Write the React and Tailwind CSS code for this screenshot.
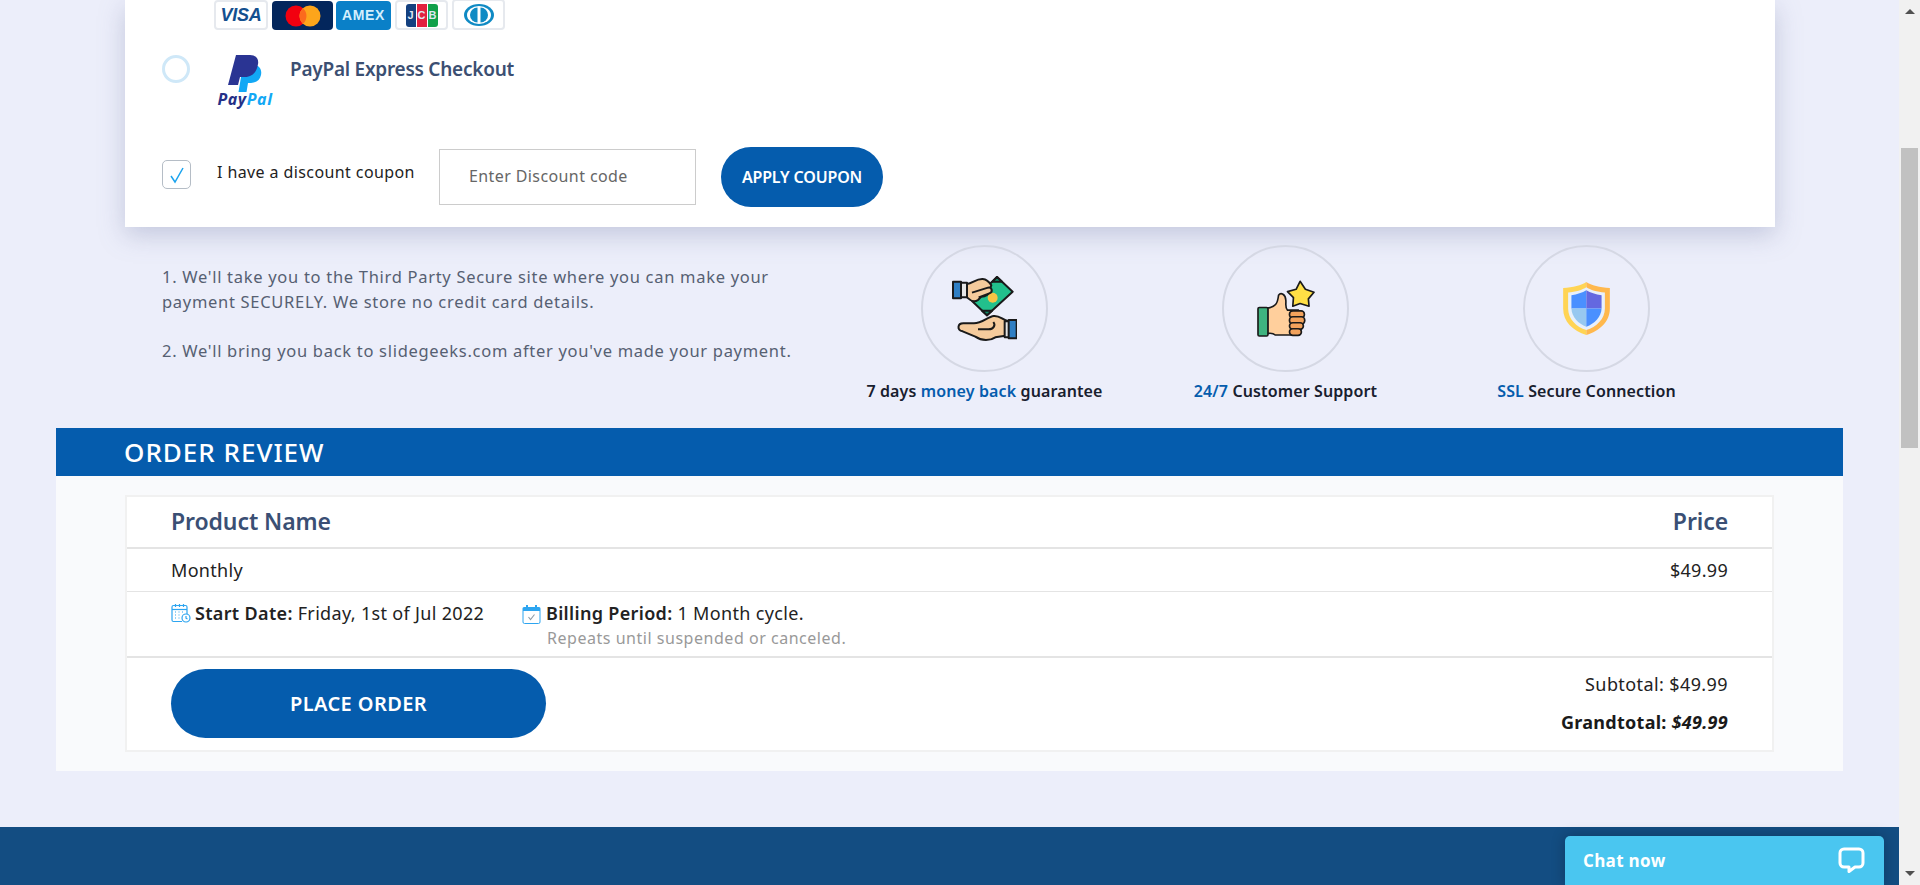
import React from "react"

function VisaCard() {
  return (
    <div className="w-[54px] h-[30px] mt-[-1px] bg-white border-2 border-[#e6e9ee] rounded-[4px] flex items-center justify-center">
      <span className="font-['Liberation_Sans',sans-serif] font-bold italic text-[18px] tracking-[-0.3px] text-[#14508f]">VISA</span>
    </div>
  )
}

function MasterCard() {
  return (
    <div className="w-[61px] h-[29px] bg-[#03265c] rounded-[4px] flex items-center justify-center">
      <svg width="38" height="22" viewBox="0 0 38 22">
        <circle cx="12" cy="11" r="10.5" fill="#f2000f" />
        <circle cx="26" cy="11" r="10.5" fill="#fda51b" />
        <path d="M19 3.2a10.5 10.5 0 0 1 0 15.6a10.5 10.5 0 0 1 0-15.6z" fill="#fb6a1d" />
      </svg>
    </div>
  )
}

function AmexCard() {
  return (
    <div className="w-[55px] h-[29px] -ml-[1px] bg-[#0a80c8] rounded-[4px] flex items-center justify-center">
      <span className="font-['Liberation_Sans',sans-serif] font-bold text-[14px] tracking-[0.6px] text-[#d4effd]">AMEX</span>
    </div>
  )
}

function JcbCard() {
  return (
    <div className="w-[53px] h-[30px] bg-white border-2 border-[#e6e9ee] rounded-[4px] flex items-center justify-center">
      <div className="flex gap-[1px] h-[23px] text-[#dfe6f2] font-bold text-[11px] font-['Liberation_Sans',sans-serif] leading-[23px] text-center">
        <span className="w-[10px] bg-[#14407f] rounded-l-[3px]">J</span>
        <span className="w-[10px] bg-[#e2213f]">C</span>
        <span className="w-[10px] bg-[#10a04a] rounded-r-[3px]">B</span>
      </div>
    </div>
  )
}

function DinersCard() {
  return (
    <div className="w-[53px] h-[31px] bg-white border-2 border-[#e6e9ee] rounded-[4px] flex items-center justify-center">
      <svg width="32" height="22" viewBox="0 0 32 22">
        <ellipse cx="16" cy="11" rx="15" ry="11" fill="#0f8ac4" />
        <ellipse cx="16" cy="11" rx="12" ry="9" fill="#fff" />
        <path d="M14.5 3.5a7.5 7.5 0 0 0 0 15z" fill="#0f8ac4" />
        <path d="M17.5 3.5a7.5 7.5 0 0 1 0 15z" fill="#0f8ac4" />
      </svg>
    </div>
  )
}

function PayPalLogo() {
  return (
    <div className="w-[58px] flex flex-col items-center">
      <svg width="34" height="37" viewBox="0 0 34 37">
        <path d="M15 10h12c5 1 7 5 6 10c-1 5-5 8-10 8h-3l-1.5 9h-8z" fill="#12a8f5" />
        <path d="M8 0h14c6 0 9 4 8 9c-1 8-6 13-13 13h-5l-2 8H0z" fill="#2a3493" />
      </svg>
      <span className="mt-[-1px] font-['Noto_Sans',sans-serif] font-bold italic text-[16px] leading-[17px] tracking-[0.6px]">
        <span className="text-[#253087]">Pay</span>
        <span className="text-[#12a8f5]">Pal</span>
      </span>
    </div>
  )
}

function MoneyIcon() {
  return (
    <svg width="65" height="65" viewBox="0 0 195 195" strokeWidth="6" stroke="#1a1a1a" strokeLinejoin="round">
      <polygon points="135,3 182,47 105,118 60,75" fill="#22c08c" />
      <polygon points="135,3 150,17 122,17" fill="#0f8f68" />
      <polygon points="105,118 90,104 120,104" fill="#0f8f68" />
      <circle cx="122" cy="65" r="15" fill="#f6c445" stroke="none" />
      <path d="M45 24C62 22 72 8 92 9C105 10 112 18 118 28L112 42C114 54 100 62 88 62L78 72C62 84 50 68 45 64z" fill="#f5cb9c" />
      <path d="M60 50L108 35C120 33 124 48 112 52L80 64" fill="#f5cb9c" />
      <rect x="25" y="20" width="20" height="44" fill="#e6e6e6" />
      <rect x="3" y="17" width="24" height="50" fill="#2f7fc4" />
      <path d="M170 136C150 132 145 118 125 120C108 122 90 142 66 142H34C16 142 14 162 32 166L70 182C90 196 115 194 130 184L170 178z" fill="#f5cb9c" />
      <path d="M78 160H110C124 160 132 148 124 138" fill="none" />
      <rect x="158" y="136" width="16" height="48" fill="#e6e6e6" />
      <rect x="170" y="132" width="24" height="55" fill="#2f7fc4" />
    </svg>
  )
}

function ThumbIcon() {
  return (
    <svg width="58" height="57" viewBox="0 0 175 170" strokeWidth="5" stroke="#1a1a1a" strokeLinejoin="round">
      <polygon points="130,3 146,27 172,36 155,56 157,78 130,70 108,78 110,52 92,34 118,27" fill="#ffdf45" />
      <path d="M32 84C55 80 62 72 65 45C72 35 86 42 87 60C88 72 84 82 92 90H125V165H55C48 158 40 160 32 160z" fill="#ffcf9c" />
      <rect x="98" y="92" width="45" height="22" rx="10" fill="#f2a25c" />
      <rect x="98" y="110" width="46" height="22" rx="10" fill="#f2a25c" />
      <rect x="98" y="128" width="42" height="20" rx="10" fill="#f2a25c" />
      <rect x="98" y="146" width="36" height="20" rx="10" fill="#f2a25c" />
      <rect x="3" y="82" width="30" height="86" rx="4" fill="#3fb37f" />
    </svg>
  )
}

function ShieldIcon() {
  return (
    <svg width="47" height="53" viewBox="0 0 141 160">
      <path d="M70 0C55 10 30 16 0 18V80C0 120 30 148 70 160z" fill="#ffd454" />
      <path d="M70 0C85 10 110 16 141 18V80C141 120 110 148 70 160z" fill="#ffb84d" />
      <path d="M70 16C58 24 38 30 15 32V80C15 112 40 136 70 145C100 136 126 112 126 80V32C102 30 82 24 70 16z" fill="#e8f0fb" />
      <path d="M70 25C58 32 42 38 25 40V80H70z" fill="#4a90ff" />
      <path d="M70 25C82 32 98 38 116 40V80H70z" fill="#6468e0" />
      <path d="M25 80C26 106 46 126 70 135V80z" fill="#97c8f0" />
      <path d="M116 80C115 106 94 126 70 135V80z" fill="#4a90ff" />
    </svg>
  )
}

function StartIcon() {
  return (
    <svg width="20" height="20" viewBox="0 0 20 20" fill="none" stroke="#2da5f0" strokeWidth="1.2" className="shrink-0">
      <path d="M11 18.5H2.5a1.5 1.5 0 0 1-1.5-1.5V4a1.5 1.5 0 0 1 1.5-1.5h12A1.5 1.5 0 0 1 16 4v7" />
      <path d="M1 6.5h15" />
      <path d="M4.5 1v3M8.5 1v3M12.5 1v3" />
      <path d="M4 9h1.5M7.5 9H9M11 9h1.5M4 12h1.5M7.5 12H9M4 15h1.5M7.5 15H9" strokeDasharray="1 0.5" />
      <circle cx="15" cy="15" r="4" />
      <path d="M15 13v2.2l1.5 0.8" />
    </svg>
  )
}

function BillingIcon() {
  return (
    <svg width="19" height="20" viewBox="0 0 19 20" className="shrink-0">
      <path d="M2 3h15a1.5 1.5 0 0 1 1.5 1.5V7H.5V4.500A1.500 1.500 0 0 1 2 3z" fill="#2da5f0" />
      <rect x="4" y="1" width="2" height="4" fill="#2da5f0" />
      <rect x="13" y="1" width="2" height="4" fill="#2da5f0" />
      <path d="M1 7v11a1.5 1.5 0 0 0 1.5 1.5h14A1.5 1.5 0 0 0 18 18V7" fill="#fff" stroke="#2da5f0" />
      <path d="M6.5 13l2 2.5l4-5" fill="none" stroke="#8f9aa5" strokeWidth="1.1" />
    </svg>
  )
}

function Feature({ icon, children }) {
  return (
    <div className="w-[301px] flex flex-col items-center">
      <div className="w-[127px] h-[127px] rounded-full border-2 border-[#d5d8e4] flex items-center justify-center">
        {icon}
      </div>
      <p className="mt-[8px] text-[16px] leading-[22px] font-semibold text-[#18202e] tracking-[0.12px] whitespace-nowrap">
        {children}
      </p>
    </div>
  )
}

function Scrollbar() {
  return (
    <div className="w-[21px] shrink-0 bg-[#f1f1f1] flex flex-col items-center">
      <div className="mt-[9px] h-0 w-0 border-x-[5px] border-x-transparent border-b-[5px] border-b-[#505050]" />
      <div className="mt-[134px] w-[17px] h-[300px] bg-[#c1c1c1]" />
      <div className="mt-[423px] h-0 w-0 border-x-[5px] border-x-transparent border-t-[5px] border-t-[#505050]" />
    </div>
  )
}

export default function App() {
  return (
    <div className="h-[885px] overflow-hidden flex bg-[#eceefa] font-['Noto_Sans',sans-serif]">
      <main className="relative flex-1 min-w-0 flex flex-col">
        {/* Payment card */}
        <section className="mx-[125px] w-[1650px] h-[227px] shrink-0 bg-white shadow-[0_8px_24px_rgba(120,128,170,0.35)] px-[37px]">
          <div className="ml-[52px] flex items-end gap-[4px] h-[30px] overflow-hidden">
            <VisaCard />
            <MasterCard />
            <AmexCard />
            <JcbCard />
            <DinersCard />
          </div>
          <div className="mt-[25px] flex items-start">
            <div className="w-[28px] h-[28px] rounded-full border-[3px] border-[#cfe8f8]" />
            <div className="ml-[26px]">
              <PayPalLogo />
            </div>
            <p className="ml-[16px] mt-[1px] text-[19px] leading-[26px] font-semibold text-[#3b4f72] tracking-[-0.25px] whitespace-nowrap">
              PayPal Express Checkout
            </p>
          </div>
          <div className="mt-[39px] flex items-start">
            <div className="mt-[13px] w-[29px] h-[29px] rounded-[5px] border border-[#b5bdc6] flex items-center justify-center">
              <svg width="16" height="18" viewBox="0 0 16 18" fill="none" stroke="#1aa3ee" strokeWidth="1.5">
                <path d="M2 10l4 6l8-14" />
              </svg>
            </div>
            <span className="ml-[26px] mt-[13px] text-[16px] leading-[24px] text-[#222] tracking-[0.4px] w-[222px] whitespace-nowrap">
              I have a discount coupon
            </span>
            <input
              readOnly
              placeholder="Enter Discount code"
              className="mt-[2px] w-[257px] h-[56px] border border-[#cccccc] px-[29px] pb-[2px] text-[16px] tracking-[0.4px] placeholder:text-[#666] outline-none"
            />
            <button className="ml-[25px] w-[162px] h-[60px] rounded-full bg-[#055cad] text-white text-[16px] font-semibold tracking-[-0.15px]">
              APPLY COUPON
            </button>
          </div>
        </section>

        {/* Notes and guarantees */}
        <section className="mt-[18px] h-[183px] shrink-0 flex">
          <div className="ml-[162px] mt-[20px] w-[685px] text-[16.5px] leading-[24.5px] text-[#566072] tracking-[0.7px] whitespace-nowrap">
            <p>1. We'll take you to the Third Party Secure site where you can make your</p>
            <p>payment SECURELY. We store no credit card details.</p>
            <p className="mt-[24.5px]">2. We'll bring you back to slidegeeks.com after you've made your payment.</p>
          </div>
          <div className="-ml-[13px] flex">
            <Feature icon={<MoneyIcon />}>
              7 days <span className="text-[#055cad]">money back</span> guarantee
            </Feature>
            <Feature icon={<ThumbIcon />}>
              <span className="text-[#055cad]">24/7</span> Customer Support
            </Feature>
            <Feature icon={<ShieldIcon />}>
              <span className="text-[#055cad]">SSL</span> Secure Connection
            </Feature>
          </div>
        </section>

        {/* Order review */}
        <section className="mx-[56px] w-[1787px] shrink-0 bg-[#f9fafc]">
          <h2 className="h-[48px] bg-[#055cad] pl-[68px] text-[26px] leading-[48px] font-medium text-white tracking-[1px]">
            ORDER REVIEW
          </h2>
          <div className="mx-[69px] mt-[19px] mb-[19px] border-2 border-[#f1f1f1] bg-white">
            <div className="h-[52px] border-b-2 border-[#e4e4e4] px-[44px] pb-[2px] flex items-center justify-between text-[23px] font-semibold text-[#3a4f74] tracking-[-0.1px]">
              <span>Product Name</span>
              <span>Price</span>
            </div>
            <div className="h-[43px] border-b border-[#e4e4e4] px-[44px] flex items-center justify-between text-[18px] text-[#222] tracking-[0.3px]">
              <span>Monthly</span>
              <span>$49.99</span>
            </div>
            <div className="h-[66px] border-b-2 border-[#e4e4e4] px-[44px] pt-[8px] flex items-start text-[18px] leading-[26px] text-[#222] tracking-[0.33px]">
              <div className="flex items-center w-[351px] gap-[4px]">
                <StartIcon />
                <span><b className="font-semibold">Start Date:</b> Friday, 1st of Jul 2022</span>
              </div>
              <div className="flex items-start gap-[5px]">
                <div className="mt-[4px]">
                  <BillingIcon />
                </div>
                <div>
                  <p><b className="font-semibold">Billing Period:</b> 1 Month cycle.</p>
                  <p className="text-[16px] leading-[24px] text-[#999] tracking-[0.53px] ml-[1px]">Repeats until suspended or canceled.</p>
                </div>
              </div>
            </div>
            <div className="h-[92px] px-[44px] pt-[11px] flex items-start justify-between">
              <button className="w-[375px] h-[69px] rounded-full bg-[#055cad] text-white text-[20px] font-semibold tracking-[0.4px]">
                PLACE ORDER
              </button>
              <div className="text-right text-[18px] text-[#222]">
                <p className="leading-[26px] mt-[2px] tracking-[0.4px]">Subtotal: $49.99</p>
                <p className="mt-[12px] leading-[26px] font-bold text-[#1a1a1a] tracking-[0.27px]">
                  Grandtotal: <i>$49.99</i>
                </p>
              </div>
            </div>
          </div>
        </section>

        {/* Footer */}
        <footer className="mt-[56px] flex-1 bg-[#134d82]" />

        {/* Chat widget */}
        <div className="absolute left-[1565px] top-[836px] w-[319px] h-[49px] bg-[#4ac6f0] rounded-t-[5px] shadow-[0_0_14px_rgba(0,0,0,0.25)] flex items-center justify-between pl-[18px] pr-[19px]">
          <span className="font-['Open_Sans',sans-serif] font-bold text-[17px] tracking-[0.3px] text-white">Chat now</span>
          <svg width="27" height="27" viewBox="0 0 27 27" fill="none" stroke="#fff" strokeWidth="3" strokeLinejoin="round">
            <path d="M6 2h15a4 4 0 0 1 4 4v10a4 4 0 0 1-4 4h-4l-6 4.5v-4.5H6a4 4 0 0 1-4-4V6a4 4 0 0 1 4-4z" />
          </svg>
        </div>
      </main>
      <Scrollbar />
    </div>
  )
}
